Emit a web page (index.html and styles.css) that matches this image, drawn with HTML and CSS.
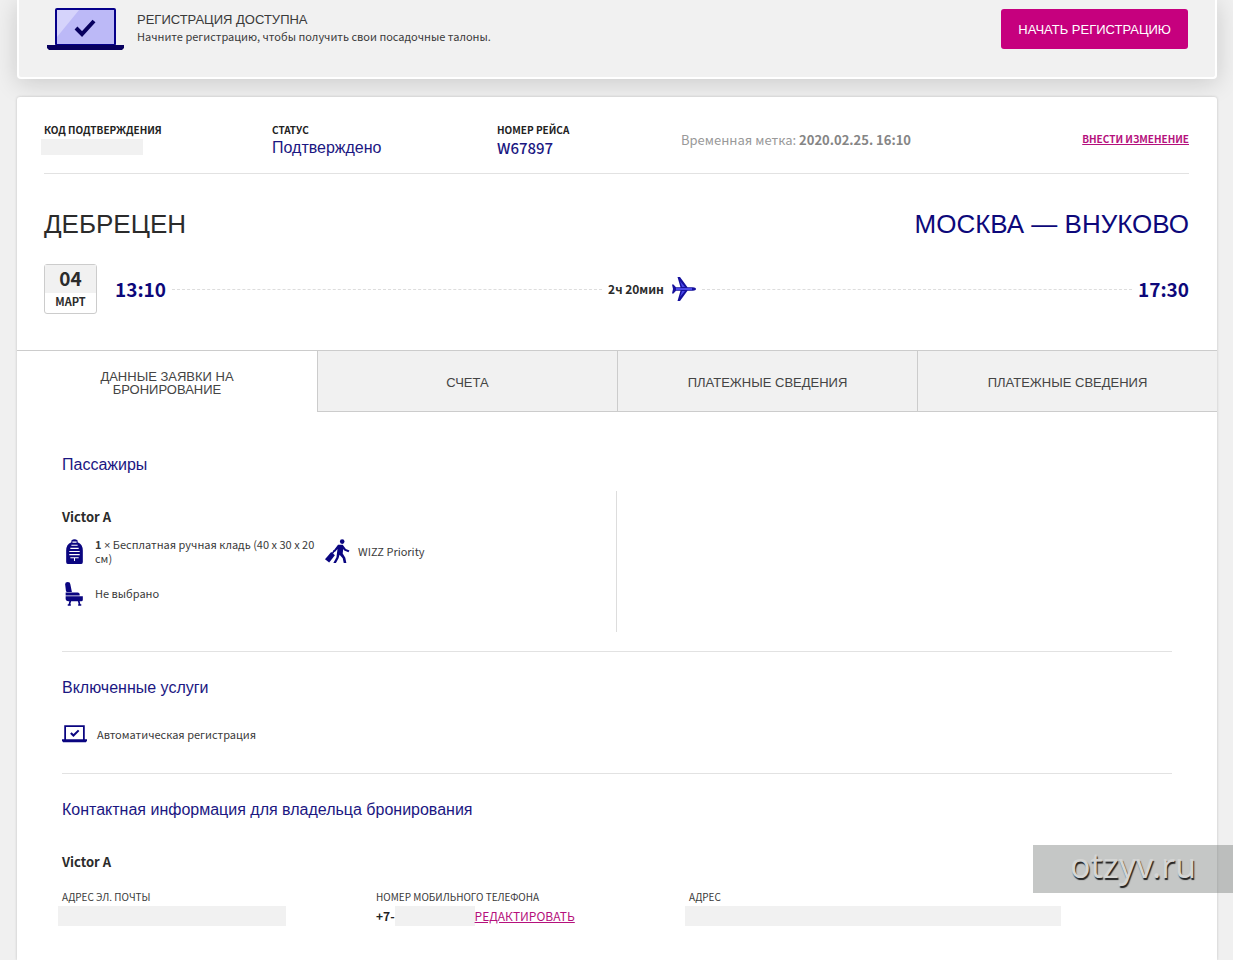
FILE: index.html
```html
<!DOCTYPE html>
<html lang="ru">
<head>
<meta charset="utf-8">
<meta name="viewport" content="width=device-width, initial-scale=1">
<title>Данные бронирования</title>
<link rel="stylesheet" href="styles.css">
</head>
<body>
<main class="page">
  <section class="banner">
    <svg class="banner-icon" viewBox="0 0 77 42" aria-hidden="true">
      <rect x="8" y="0" width="61" height="38" rx="2" fill="#06008a"/>
      <rect x="10" y="2" width="57" height="34" fill="#bcb9f7"/>
      <path d="M10 2h22L10 29z" fill="#d5d3fb"/>
      <path d="M29 20l6 6 12-13" fill="none" stroke="#08005f" stroke-width="4"/>
      <path d="M0 37h77v3l-2 2H2l-2-2z" fill="#08005f"/>
    </svg>
    <div class="banner-text">
      <h2 class="banner-title">РЕГИСТРАЦИЯ ДОСТУПНА</h2>
      <p class="banner-note">Начните регистрацию, чтобы получить свои посадочные талоны.</p>
    </div>
    <button class="primary" type="button">НАЧАТЬ РЕГИСТРАЦИЮ</button>
  </section>

  <section class="card">
    <div class="flight">
      <div class="summary">
        <div class="fact">
          <span class="fact-label">КОД ПОДТВЕРЖДЕНИЯ</span>
          <span class="redacted redacted-code"></span>
        </div>
        <div class="fact">
          <span class="fact-label">СТАТУС</span>
          <span class="fact-value">Подтверждено</span>
        </div>
        <div class="fact">
          <span class="fact-label">НОМЕР РЕЙСА</span>
          <span class="fact-value fact-number">W67897</span>
        </div>
        <p class="stamp">Временная метка: <b>2020.02.25. 16:10</b></p>
        <a class="link change" href="#change">ВНЕСТИ ИЗМЕНЕНИЕ</a>
      </div>

      <div class="cities">
        <h1 class="city">ДЕБРЕЦЕН</h1>
        <h1 class="city city-to">МОСКВА — ВНУКОВО</h1>
      </div>

      <div class="route">
        <div class="date">
          <span class="day">04</span>
          <span class="month">МАРТ</span>
        </div>
        <span class="time">13:10</span>
        <span class="dots"></span>
        <span class="duration">2ч 20мин</span>
        <svg class="plane" viewBox="0 0 24 24" aria-hidden="true">
          <path d="M24 12c0-1-1.500-1.700-3-1.700h-5.500L8 0H5.500l3 10.300H4L1.500 7.500H0L1 12l-1 4.500h1.500L4 13.700h4.500L5.500 24H8l7.500-10.300H21c1.500 0 3-.7 3-1.700z" fill="#15109c"/>
          <path d="M4 11h16v2H4zM10 10l-2-6 5 6zM10 14l-2 6 5-6z" fill="#4a48e8"/>
        </svg>
        <span class="dots"></span>
        <span class="time">17:30</span>
      </div>
    </div>

    <nav class="tabs" role="tablist">
      <button class="tab tab-active" role="tab" aria-selected="true" type="button">ДАННЫЕ ЗАЯВКИ НА<br>БРОНИРОВАНИЕ</button>
      <button class="tab" role="tab" aria-selected="false" type="button">СЧЕТА</button>
      <button class="tab" role="tab" aria-selected="false" type="button">ПЛАТЕЖНЫЕ СВЕДЕНИЯ</button>
      <button class="tab" role="tab" aria-selected="false" type="button">ПЛАТЕЖНЫЕ СВЕДЕНИЯ</button>
    </nav>

    <div class="details">
      <section class="block">
        <h3 class="heading">Пассажиры</h3>
        <div class="passengers">
          <div class="passenger">
            <h4 class="name">Victor A</h4>
            <ul class="extras">
              <li class="extra">
                <svg class="icon" viewBox="0 0 24 24" aria-hidden="true">
                  <path d="M9 3V1.500Q12-1 15 1.500V3Q20 5 20 11v11q0 2-1.500 2h-13Q4 24 4 22V11Q4 5 9 3z" fill="#0a0580"/>
                  <path d="M10 3h4M9 6h6M8 9h8M7 12h10M7 15h10M8 18h8M12 18v3" stroke="#fff" stroke-width="1"/>
                </svg>
                <span><b>1</b> <span class="times">×</span> Бесплатная ручная кладь (40 x 30 x 20 см)</span>
              </li>
              <li class="extra">
                <svg class="icon" viewBox="0 0 24 24" aria-hidden="true">
                  <circle cx="16.500" cy="2.500" r="2.200" fill="#0a0580"/>
                  <path d="M12.500 5.500H17l3 4 3.500 1.500-1 1.800-4-1.800-1-1.300-.5 4.300 2.500 4 1 5h-2.500l-1-4.500-3-3.500-1 3.500-2.500 4.500H8l3-5.500 1-8-2.500 3-1.500-1z" fill="#0a0580"/>
                  <path d="M6 12.500l3.500 3L4 22.500l-4-3z" fill="#0a0580"/>
                  <path d="M9 11l-2 3" stroke="#0a0580" stroke-width="1.500"/>
                </svg>
                <span>WIZZ Priority</span>
              </li>
              <li class="extra">
                <svg class="icon" viewBox="0 0 24 24" aria-hidden="true">
                  <path d="M3 3q0-2 2.500-2T8 3l1.500 7.500H5q-1 0-1.200-1z" fill="#0a0580"/>
                  <path d="M3.500 11H15q2 0 2 2v1H3.500zM3.500 14.700H20V18q0 1.500-1.500 1.500H6q-2 0-2.500-2z" fill="#0a0580"/>
                  <path d="M8 19l-1 4M16 19l1 4M5.500 23h3M15.500 23h3" stroke="#0a0580" stroke-width="1.600"/>
                </svg>
                <span>Не выбрано</span>
              </li>
            </ul>
          </div>
        </div>
      </section>

      <section class="block">
        <h3 class="heading">Включенные услуги</h3>
        <p class="service">
          <svg class="icon" viewBox="0 0 24 24" aria-hidden="true">
            <path d="M3 19V5h18v14" fill="none" stroke="#0a0580" stroke-width="1.700"/>
            <path d="M0 17.500h24V19l-1 1.500H1L0 19z" fill="#0a0580"/>
            <path d="M8.500 11.500l2.500 2.500 5-5" fill="none" stroke="#0a0580" stroke-width="2"/>
          </svg>
          <span>Автоматическая регистрация</span>
        </p>
      </section>

      <section class="block">
        <h3 class="heading">Контактная информация для владельца бронирования</h3>
        <h4 class="name owner">Victor A</h4>
        <div class="contacts">
          <div class="contact">
            <span class="contact-label">АДРЕС ЭЛ. ПОЧТЫ</span>
            <span class="redacted redacted-mail"></span>
          </div>
          <div class="contact">
            <span class="contact-label">НОМЕР МОБИЛЬНОГО ТЕЛЕФОНА</span>
            <span class="phone"><b>+7-</b><span class="redacted redacted-phone"></span><a class="link" href="#edit">РЕДАКТИРОВАТЬ</a></span>
          </div>
          <div class="contact">
            <span class="contact-label">АДРЕС</span>
            <span class="redacted redacted-address"></span>
          </div>
        </div>
      </section>
    </div>
  </section>
</main>
<div class="watermark">otzyv.ru</div>
</body>
</html>
```

FILE: styles.css
```css
* {
  box-sizing: border-box;
}

html {
  overflow-x: hidden;
}

body {
  margin: 0;
  min-height: 100vh;
  background: #f0f0f0;
  color: #3a3a3a;
  font: 12px/16px "Noto Sans CJK SC", sans-serif;
}

h1, h2, h3, h4, p, ul {
  margin: 0;
  padding: 0;
  font-weight: 400;
}

button {
  font-family: "Liberation Sans", Arial, sans-serif;
  cursor: pointer;
}

.page {
  display: flex;
  flex-direction: column;
  gap: 18px;
  min-height: 100vh;
  padding: 0 16px 0 17px;
}

.banner {
  display: flex;
  align-items: flex-start;
  padding: 8px 27px 27px 28px;
  border: 2px solid #fff;
  border-top: 0;
  border-radius: 0 0 4px 4px;
  background: #f1f1f1;
  box-shadow: 0 4px 24px rgba(0, 0, 0, 0.16);
}

.banner-icon {
  width: 77px;
  height: 42px;
}

.banner-text {
  flex: 1;
  padding: 4px 0 0 13px;
}

.banner-title {
  font: 13px/16px "Liberation Sans", Arial, sans-serif;
}

.banner-note {
  font-size: 11px;
  line-height: 16px;
}

.primary {
  height: 40px;
  margin-top: 1px;
  padding: 0 17px;
  border: 0;
  border-radius: 3px;
  background: #c6007e;
  color: #fff;
  font-size: 13px;
}

.card {
  flex: 1;
  border-radius: 3px 3px 0 0;
  background: #fff;
  box-shadow: 0 0 3px rgba(0, 0, 0, 0.2);
}

.flight {
  padding: 24px 28px 36px 27px;
}

.summary {
  display: grid;
  grid-template-columns: 228fr 225fr 184fr 300fr 208fr;
  align-items: center;
  padding-bottom: 16px;
  border-bottom: 1px solid #e2e2e2;
}

.fact {
  display: flex;
  flex-direction: column;
}

.fact-label {
  color: #222;
  font-size: 10px;
  font-weight: 700;
  line-height: 18px;
}

.fact-value {
  color: #1b1782;
  font: 16px/18px "Liberation Sans", Arial, sans-serif;
}

.fact-number {
  font: 500 15px/18px "Noto Sans CJK SC", sans-serif;
}

.stamp {
  padding-top: 2px;
  color: #999;
  font-size: 13px;
  line-height: 20px;
}

.stamp b {
  color: #858585;
}

.link {
  color: #b5107c;
  text-decoration: underline;
}

.change {
  justify-self: end;
  font-size: 10px;
  font-weight: 700;
}

.redacted {
  display: block;
  height: 20px;
  background: #f1f1f1;
}

.redacted-code {
  width: 102px;
  height: 16px;
  margin: 0 0 2px -3px;
}

.cities {
  display: flex;
  justify-content: space-between;
  padding: 34px 0 24px;
}

.city {
  color: #2b2b2b;
  font: 26px/32px "Liberation Sans", Arial, sans-serif;
}

.city-to {
  color: #0d087a;
}

.route {
  display: flex;
  align-items: center;
}

.date {
  display: flex;
  flex-direction: column;
  width: 53px;
  margin-right: 18px;
  border: 1px solid #ccc;
  border-radius: 3px;
  color: #2b2b2b;
  font-weight: 700;
  text-align: center;
}

.day {
  padding-bottom: 2px;
  background: #f1f1f1;
  font-size: 19px;
  line-height: 26px;
}

.month {
  padding-bottom: 4px;
  font-size: 11px;
  line-height: 16px;
}

.time {
  color: #0d087a;
  font-size: 19px;
  font-weight: 700;
  line-height: 24px;
}

.dots {
  flex: 1;
  margin: 0 6px;
  border-top: 1px dashed #ddd;
}

.duration {
  color: #2b2b2b;
  font-weight: 700;
}

.plane {
  width: 24px;
  height: 24px;
  margin-left: 8px;
}

.tabs {
  display: grid;
  grid-template-columns: repeat(4, 1fr);
  border-top: 1px solid #ccc;
}

.tab {
  height: 61px;
  padding: 2px 0 0;
  border: solid #ccc;
  border-width: 0 0 1px 1px;
  background: #f1f1f1;
  color: #444;
  font-size: 13px;
  line-height: 13px;
}

.tab-active {
  border: 0;
  background: #fff;
}

.details {
  padding: 43px 45px 0;
}

.block + .block {
  margin-top: 19px;
  padding-top: 26px;
  border-top: 1px solid #e2e2e2;
}

.heading {
  color: #1b1782;
  font: 16px/20px "Liberation Sans", Arial, sans-serif;
}

.passengers {
  display: grid;
  grid-template-columns: 1fr 1fr;
  margin-top: 16px;
}

.passenger {
  min-height: 141px;
  padding: 16px 0;
  border-right: 1px solid #ddd;
}

.name {
  color: #2b2b2b;
  font-size: 13px;
  font-weight: 700;
  line-height: 20px;
}

.owner {
  padding-top: 32px;
}

.extras {
  display: grid;
  grid-template-columns: 263px 1fr;
  row-gap: 16px;
  padding-top: 11px;
  list-style: none;
}

.extra {
  display: flex;
  align-items: center;
  gap: 8px;
  font-size: 11px;
  line-height: 13px;
}

.times {
  font-family: "Liberation Sans", Arial, sans-serif;
}

.icon {
  flex: none;
  width: 25px;
  height: 25px;
}

.service {
  display: flex;
  align-items: center;
  gap: 10px;
  padding: 23px 0 8px;
  font-size: 11px;
}

.contacts {
  display: grid;
  grid-template-columns: 314fr 313fr 483fr;
  padding-top: 16px;
}

.contact {
  display: flex;
  flex-direction: column;
}

.contact-label {
  font-size: 10px;
  line-height: 18px;
}

.phone {
  display: flex;
  align-items: center;
  color: #222;
}

.redacted-mail {
  width: 228px;
  margin-left: -4px;
}

.redacted-phone {
  width: 80px;
}

.redacted-address {
  width: 376px;
  margin-left: -4px;
}

.watermark {
  position: absolute;
  top: 845px;
  right: 0;
  width: 200px;
  height: 48px;
  background: rgba(110, 115, 112, 0.4);
  color: #d4d5d4;
  font: 34px/40px "Noto Sans", sans-serif;
  text-align: center;
  text-shadow: 1px 2px 1px #222;
}
```
